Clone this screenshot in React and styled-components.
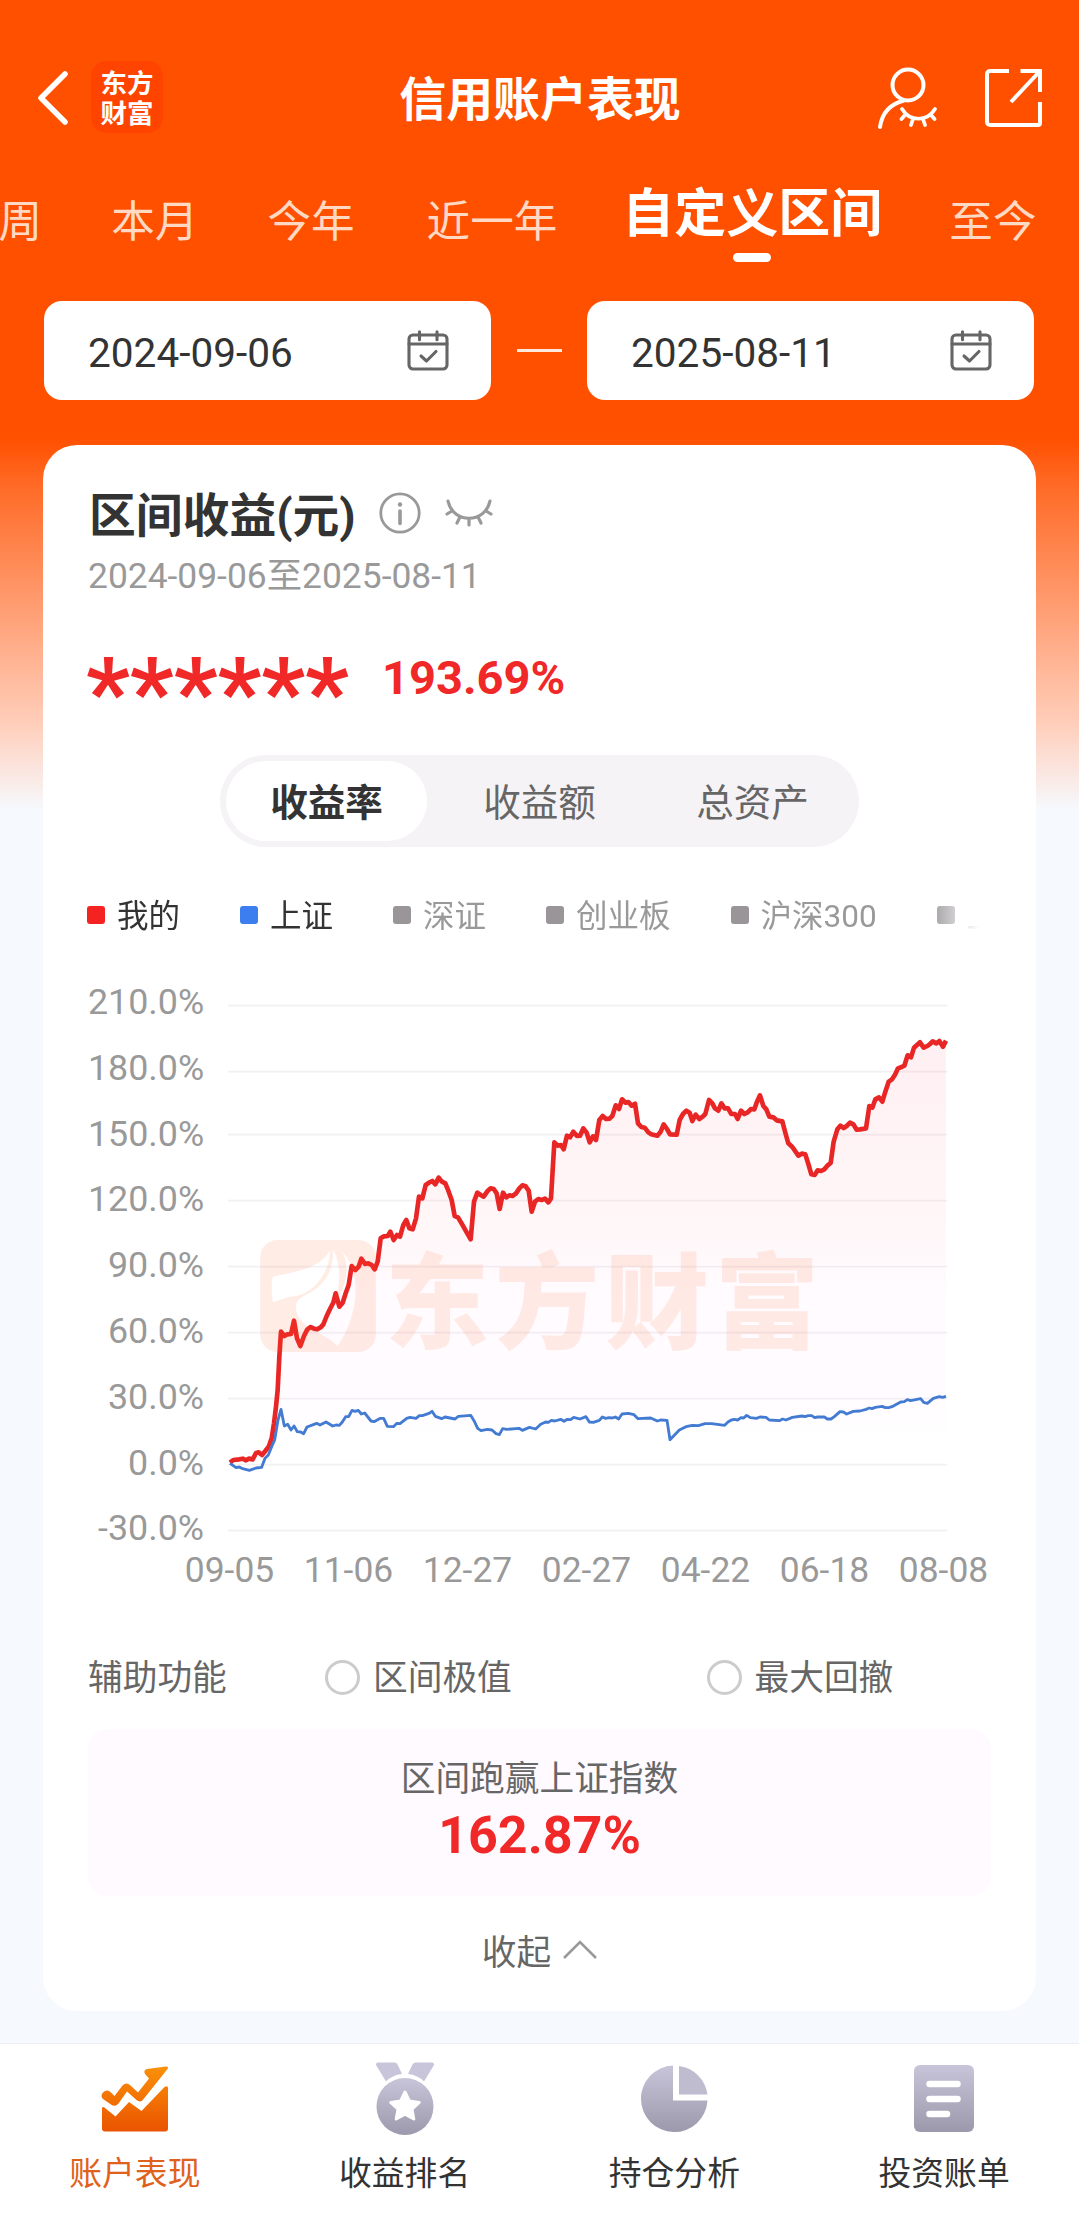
import React from "react";
import styled, { createGlobalStyle } from "styled-components";

const Global = createGlobalStyle`
  *, *::before, *::after { box-sizing: border-box; }
  body { margin: 0; background: #f6faff; }
  svg { display: block; flex: none; }
`;

const Page = styled.div`
  width: 1079px;
  height: 2229px;
  overflow: hidden;
  display: flex;
  flex-direction: column;
  font-family: Roboto, "Noto Sans CJK SC", sans-serif;
  color: #333;
  background: linear-gradient(to bottom, #ff5000 0, #ff5000 438px, #ff6a26 485px, #ffcdb9 722px, #f6faff 812px);
`;

const Header = styled.header`
  height: 78px;
  margin-top: 59px;
  padding: 0 36px 0 37px;
  display: grid;
  grid-template-columns: 1fr auto 1fr;
  align-items: center;
`;

const HeaderSide = styled.div`
  display: flex;
  align-items: center;
  justify-content: ${(p) => (p.$end ? "flex-end" : "flex-start")};
  gap: ${(p) => p.$gap}px;
`;

const BrandBadge = styled.div`
  width: 72px;
  height: 72px;
  margin-top: -2px;
  border-radius: 15px;
  background: #ff4400;
  color: #fff;
  font: 700 26.5px/30px "Noto Sans CJK SC", sans-serif;
  display: flex;
  flex-direction: column;
  align-items: center;
  justify-content: center;
`;

const Title = styled.h1`
  margin: 0;
  padding-top: 3px;
  font-size: 46.9px;
  line-height: 60px;
  font-weight: 700;
  color: #fff;
`;

const Tabs = styled.nav`
  height: 133px;
  padding-top: 41px;
  margin-left: -45px;
  display: flex;
  gap: 69px;
  white-space: nowrap;
`;

const Tab = styled.div`
  flex: none;
  margin-left: ${(p) => p.$inset || 0}px;
  font-size: 43.6px;
  line-height: 90px;
  color: #ffd9c4;
`;

const ActiveTab = styled(Tab)`
  display: flex;
  flex-direction: column;
  align-items: center;
  margin: 0 -2px 0 -4px;
  font-size: 52px;
  line-height: 74px;
  font-weight: 700;
  color: #fff;

  &::after {
    content: "";
    width: 38px;
    height: 9px;
    margin-top: 1px;
    border-radius: 5px;
    background: #fff;
  }
`;

const DateRow = styled.div`
  margin-top: 31px;
  padding: 0 45px 0 44px;
  display: flex;
  align-items: center;
  justify-content: space-between;
`;

const DateField = styled.div`
  width: 447px;
  height: 99px;
  padding: 0 42px 0 44px;
  border-radius: 18px;
  background: #fff;
  display: flex;
  align-items: center;
  justify-content: space-between;
  font-size: 40.6px;

  span { padding-top: 4px; }
`;

const Dash = styled.div`
  width: 45px;
  height: 3px;
  background: #ffe9dc;
`;

const Card = styled.main`
  margin: 45px 43px 0;
  height: 1566px;
  flex: none;
  padding: 40px 45px 0;
  border-radius: 34px;
  background: #fff;
`;

const CardHead = styled.div`
  height: 58px;
  display: flex;
  align-items: center;

  svg { margin-top: -2px; }
`;

const CardTitle = styled.h2`
  margin: 0 23px 0 1px;
  padding-top: 3px;
  font-size: 46.8px;
  line-height: 58px;
  font-weight: 700;
`;

const Period = styled.div`
  margin-top: 10px;
  font-size: 35.4px;
  line-height: 46px;
  color: #999;
`;

const AmountRow = styled.div`
  height: 60px;
  margin-top: 48px;
  display: flex;
  color: #f02828;
  font-weight: 700;
  line-height: 62px;
`;

const Masked = styled.span`
  width: 296px;
  margin-left: -2px;
  font-size: 96.5px;
  line-height: 93px;
`;

const Rate = styled.span`
  font-size: 47px;
`;

const Segments = styled.div`
  width: 639px;
  height: 92px;
  margin: 48px auto 0;
  padding: 6px;
  border-radius: 46px;
  background: #f6f3f7;
  display: flex;
  justify-content: space-between;
`;

const Segment = styled.div`
  width: 201px;
  height: 80px;
  border-radius: 40px;
  font-size: 37.6px;
  line-height: 84px;
  text-align: center;
  color: ${(p) => (p.$on ? "#333" : "#666")};
  font-weight: ${(p) => (p.$on ? 700 : 400)};
  background: ${(p) => (p.$on ? "#fff" : "transparent")};
`;

const Legend = styled.div`
  width: 894px;
  height: 50px;
  margin: 43px 0 0 -1px;
  overflow: hidden;
  display: flex;
  gap: 60px;
  mask-image: linear-gradient(to right, #000 840px, transparent 892px);
`;

const LegendItem = styled.div`
  flex: none;
  display: flex;
  align-items: center;
  gap: 12px;
  font-size: 31.5px;
  line-height: 46px;
  color: ${(p) => (p.$muted ? "#999" : "#333")};

  span { padding-top: 3px; }

  &::before {
    content: "";
    width: 18px;
    height: 18px;
    margin-top: -1px;
    border-radius: 3px;
    background: ${(p) => p.$color};
  }
`;

const Chart = styled.div`
  position: relative;
  margin-top: 29px;
  display: flex;
`;

const YAxis = styled.div`
  width: 116px;
  margin: 1px 24px -1px 0;
  display: flex;
  flex-direction: column;
  text-align: right;
  font-size: 35.8px;
  line-height: 65.8px;
  color: #999;
`;

const Watermark = styled.div`
  position: absolute;
  left: 172px;
  top: 271px;
  height: 112px;
  display: flex;
  align-items: center;
  gap: 9px;
  font: 900 104px/108px "Noto Sans CJK SC", sans-serif;
  letter-spacing: 6px;
  color: #ff5a14;
  opacity: 0.105;
`;

const XAxis = styled.div`
  margin: -11px -12px 0 82px;
  height: 40px;
  display: flex;
  font-size: 35.4px;
  line-height: 40px;
  color: #999;

  span { flex: 1; text-align: center; }
`;

const Helpers = styled.div`
  height: 46px;
  margin-top: 64px;
  display: grid;
  grid-template-columns: 237px 381.5px 1fr;
  font-size: 34.7px;
  line-height: 49px;
  color: #666;
`;

const Option = styled.label`
  display: flex;
  align-items: center;
  gap: 13px;

  &::before {
    content: "";
    width: 35px;
    height: 35px;
    margin-top: -3px;
    border: 3px solid #ccc;
    border-radius: 50%;
  }
`;

const Outperform = styled.div`
  height: 167px;
  margin-top: 29px;
  padding-top: 27px;
  border-radius: 20px;
  background: #fffaff;
  text-align: center;
  font-size: 34.7px;
  line-height: 47px;
  color: #666;

  strong {
    display: block;
    margin-top: 3px;
    font-size: 52px;
    line-height: 60px;
    color: #f02828;
  }
`;

const Collapse = styled.div`
  height: 50px;
  margin-top: 31px;
  display: flex;
  align-items: center;
  justify-content: center;
  gap: 12px;
  font-size: 34.7px;
  line-height: 50px;
  color: #666;

  span { padding-top: 2px; }
  svg { margin-top: -4px; }
`;

const Footer = styled.footer`
  margin-top: 32px;
  height: 186px;
  flex: none;
  border-top: 1px solid #eceef2;
  background: #fff;
  display: grid;
  grid-template-columns: repeat(4, 1fr);
`;

const FooterItem = styled.div`
  display: flex;
  flex-direction: column;
  align-items: center;
  padding-top: 14px;
  font-size: 32.8px;
  line-height: 46px;
  color: ${(p) => (p.$on ? "#e0611c" : "#333")};

  svg { margin-bottom: 13px; }
`;

const RATE = "90,1448 100,1440 118,1438 128,1436 138,1441 146,1436 158,1438 168,1419 176,1417 186,1425 196,1413 206,1400 215,1375 222,1330 228,1280 233,1230 238,1130 243,1055 253,1068 262,1063 273,1062 282,1022 291,1075 301,1098 312,1068 322,1048 332,1041 342,1046 352,1048 362,1042 370,1033 380,1008 390,987 400,968 407,940 418,980 428,968 437,940 446,915 455,858 466,870 476,860 484,836 495,852 505,850 515,855 524,868 533,845 542,775 552,769 563,768 571,755 581,780 591,765 600,770 610,735 619,720 628,745 638,748 648,715 657,650 667,655 677,615 687,608 697,603 706,613 716,593 726,605 736,610 745,632 755,660 764,708 774,712 783,727 812,778 822,665 832,638 842,645 851,650 862,634 872,625 881,627 890,640 899,687 909,638 919,652 928,646 938,648 948,640 958,625 967,616 977,619 986,632 995,695 1005,665 1015,657 1025,660 1035,656 1045,667 1053,655 1063,487 1073,497 1083,495 1091,508 1101,467 1110,472 1120,455 1131,468 1140,467 1150,445 1160,458 1169,487 1179,469 1188,480 1198,420 1208,408 1218,417 1228,416 1237,408 1247,376 1257,387 1266,358 1277,368 1285,366 1295,377 1305,371 1314,430 1324,441 1334,443 1345,457 1354,463 1372,467 1382,455 1391,433 1401,447 1410,463 1430,464 1439,420 1449,402 1459,392 1469,398 1477,423 1487,404 1498,417 1508,410 1516,402 1527,360 1537,370 1545,385 1555,392 1564,370 1574,385 1584,385 1594,402 1605,402 1613,417 1623,392 1633,402 1643,397 1653,387 1663,388 1671,365 1680,346 1690,378 1699,388 1708,410 1720,412 1730,421 1747,424 1757,462 1765,490 1777,501 1795,527 1805,521 1816,523 1826,555 1834,583 1844,585 1853,571 1863,573 1873,568 1882,557 1892,549 1901,485 1912,448 1921,437 1931,444 1940,438 1950,428 1960,433 1970,449 1980,448 1998,445 2008,378 2017,383 2026,358 2037,352 2047,365 2056,335 2066,305 2076,298 2085,284 2094,265 2105,261 2113,257 2123,226 2133,232 2142,203 2151,195 2160,187 2171,203 2182,198 2190,192 2198,184 2209,190 2218,183 2229,200 2238,182";

const INDEX = "90,1450 108,1463 118,1461 128,1466 148,1471 168,1464 185,1462 195,1435 205,1425 215,1400 224,1380 234,1320 243,1288 253,1338 263,1333 273,1350 282,1338 292,1355 302,1356 311,1361 321,1341 340,1334 350,1330 360,1335 378,1326 398,1338 408,1335 418,1336 427,1326 437,1310 446,1310 456,1291 465,1294 475,1291 484,1302 494,1299 513,1323 522,1325 541,1315 551,1315 562,1339 581,1340 590,1330 600,1331 620,1315 630,1312 648,1315 658,1307 667,1307 687,1300 696,1294 706,1309 725,1316 735,1311 765,1317 775,1309 812,1306 822,1322 833,1345 843,1352 862,1348 876,1350 888,1361 898,1364 908,1346 920,1348 957,1345 967,1351 988,1342 1007,1347 1022,1333 1037,1326 1045,1327 1054,1321 1064,1323 1082,1318 1092,1324 1102,1318 1112,1319 1121,1312 1140,1317 1158,1310 1168,1326 1180,1327 1198,1321 1207,1311 1217,1315 1227,1313 1237,1314 1246,1311 1256,1317 1266,1302 1285,1300 1302,1304 1314,1316 1352,1314 1372,1323 1382,1320 1401,1321 1410,1379 1438,1350 1458,1340 1477,1336 1495,1337 1515,1331 1535,1331 1574,1336 1584,1326 1594,1320 1603,1318 1613,1320 1623,1313 1631,1314 1640,1306 1651,1313 1669,1315 1680,1311 1698,1312 1708,1320 1738,1322 1748,1317 1758,1320 1777,1312 1806,1308 1815,1310 1825,1307 1835,1307 1844,1313 1853,1311 1873,1311 1882,1317 1893,1317 1903,1310 1920,1295 1930,1296 1940,1302 1960,1294 1980,1293 1998,1288 2008,1284 2016,1286 2026,1282 2046,1279 2056,1283 2066,1283 2076,1280 2102,1266 2113,1265 2122,1259 2132,1262 2162,1256 2171,1267 2182,1270 2200,1255 2218,1250 2228,1252 2238,1249";

const GRID = [77, 275, 464, 662, 860, 1058, 1256, 1454, 1652];
const Y_LABELS = ["210.0%", "180.0%", "150.0%", "120.0%", "90.0%", "60.0%", "30.0%", "0.0%", "-30.0%"];
const X_LABELS = ["09-05", "11-06", "12-27", "02-27", "04-22", "06-18", "08-08"];

const LEGEND = [
  { name: "我的", color: "#f52222" },
  { name: "上证", color: "#3c7df0" },
  { name: "深证", color: "#999599", muted: true },
  { name: "创业板", color: "#999599", muted: true },
  { name: "沪深300", color: "#999599", muted: true },
  { name: "上证50", color: "#999599", muted: true },
];

const BackIcon = () => (
  <svg width="34" height="54" viewBox="0 0 34 54" fill="none" stroke="#fff" strokeWidth="5.500" strokeLinecap="round" strokeLinejoin="round">
    <path d="M28 3 4 27l24 24" />
  </svg>
);

const UserHiddenIcon = () => (
  <svg width="60" height="64" viewBox="0 0 60 64" fill="none" stroke="#fff" strokeWidth="4" strokeLinecap="round">
    <circle cx="31" cy="19" r="15.500" />
    <path d="M27 34.500C13 38 5 47 3 61" />
    <path d="M25 43c8 13 25 13 33 0M28 49l-3.500 4M36 53l-2 6M46 53l2 6M54 49l3.500 4" strokeWidth="3.700" />
  </svg>
);

const ShareIcon = () => (
  <svg width="58" height="60" viewBox="0 0 58 60" fill="none" stroke="#fff" strokeWidth="4">
    <path d="M24 3H5a3 3 0 0 0-3 3v48a3 3 0 0 0 3 3h48a2 2 0 0 0 2-2V34" />
    <path d="M35.500 3H55v21M55 3 26 34" />
  </svg>
);

const CalendarIcon = () => (
  <svg width="42" height="42" viewBox="0 0 42 42" fill="none" stroke="#666" strokeWidth="3.100" strokeLinecap="round" strokeLinejoin="round">
    <rect x="2" y="5" width="38" height="34" rx="4" />
    <path d="M2 14h38M12.500 1.800v8M30 1.800v8M14 26l5.500 5 9.500-9.500" />
  </svg>
);

const InfoIcon = () => (
  <svg width="42" height="42" viewBox="0 0 42 42" fill="none" stroke="#999" strokeWidth="2.800" strokeLinecap="round">
    <circle cx="21" cy="21" r="19.200" />
    <path d="M21 19v12.500" strokeWidth="3.600" />
    <circle cx="21" cy="12.500" r="2.200" fill="#999" stroke="none" />
  </svg>
);

const EyeClosedIcon = () => (
  <svg width="48" height="30" viewBox="0 0 48 30" fill="none" stroke="#999" strokeWidth="3.200" strokeLinecap="round">
    <path d="M3 3c5 23 37 23 42 0M7 13l-5 3M15 19l-3 6M24 21v6M33 19l3 6M41 13l5 3" />
  </svg>
);

const BrandMark = () => (
  <svg width="116" height="112" viewBox="180 780 346 335">
    <path
      fill="#ff5a14"
      fillRule="evenodd"
      d="M232 780H474a52 52 0 0 1 52 52V1063a52 52 0 0 1-52 52H232a52 52 0 0 1-52-52V832a52 52 0 0 1 52-52ZM218 890C300 872 360 862 388 812C392 860 350 945 270 950C250 955 232 962 218 966C214 940 213 905 218 890ZM398 808C402 870 370 920 320 942C285 958 284 975 290 1000C310 1050 380 1060 412 1098C470 1010 490 890 425 812C455 870 430 940 398 970C425 910 420 850 398 808Z"
    />
  </svg>
);

const ChevronUp = () => (
  <svg width="34" height="22" viewBox="0 0 34 22" fill="none" stroke="#999" strokeWidth="2.600">
    <path d="M1 19 17 3l16 16" />
  </svg>
);

const GreyGradient = ({ id }) => (
  <linearGradient id={id} x1="0" y1="0" x2="0" y2="1">
    <stop offset="0" stopColor="#c8c5da" />
    <stop offset="1" stopColor="#9c99ac" />
  </linearGradient>
);

const TrendIcon = () => (
  <svg width="68" height="80" viewBox="0 0 68 80">
    <defs>
      <linearGradient id="trend" gradientUnits="userSpaceOnUse" x1="0" y1="7" x2="0" y2="73">
        <stop offset="0" stopColor="#fb9208" />
        <stop offset="1" stopColor="#ea5400" />
      </linearGradient>
    </defs>
    <path fill="url(#trend)" d="M2 34.500q4-4 8 0l3.500 3.500 8-10.500q4-4 8 0l7.500 7 11-14-4-4.500q-2-4 2-5l19-2.500q3 0 1.500 2.500L43 40.500q-3 5-7.500 1.500l-9.500-8.500-8.500 12q-3.500 4-7.500 1L2 41q-3-3 0-6.500Z" />
    <path fill="url(#trend)" d="M1 50q1-2 3 0l10.500 8.500L28 44l12.500 9L63.500 29q3.500-2 3.500 1v40.500q0 3-3 3H4q-3 0-3-3Z" />
  </svg>
);

const MedalIcon = () => (
  <svg width="68" height="80" viewBox="0 0 68 80">
    <defs><GreyGradient id="medal" /></defs>
    <path fill="#c8c5da" d="M7 4.500h16.500q2 0 3 2l4.500 9.500q-10 1-16 7.500L5 7Q4.500 5 7 4.500ZM61 4.500H44.500q-2 0-3 2l-4.500 9.500q10 1 16 7.500L63 7q.5-2-2-2.500Z" />
    <circle cx="34" cy="48.500" r="28.500" fill="url(#medal)" />
    <path fill="#fff" stroke="#fff" strokeWidth="3" strokeLinejoin="round" d="m34 34 4.300 9 10 1.400-7.300 6.800 1.800 9.800-8.800-4.700-8.800 4.700 1.800-9.800-7.300-6.800 10-1.400Z" />
  </svg>
);

const PieIcon = () => (
  <svg width="68" height="80" viewBox="0 0 68 80">
    <defs><GreyGradient id="pie" /></defs>
    <path fill="url(#pie)" d="M33 7.500a33.300 33.300 0 1 0 34.500 35H33Z" />
    <path fill="#bfbcd0" d="M39 8v28.500h28.500A33 33 0 0 0 39 8Z" />
  </svg>
);

const BillIcon = () => (
  <svg width="68" height="80" viewBox="0 0 68 80">
    <defs><GreyGradient id="bill" /></defs>
    <rect x="4" y="7" width="60" height="67" rx="6" fill="url(#bill)" />
    <path d="M19.500 26h28M19.500 41h28M19.500 56H37" stroke="#fff" strokeWidth="6.500" strokeLinecap="round" />
  </svg>
);

const Plot = () => (
  <svg width="720" height="592" viewBox="84 -33 2160 1776">
    <defs>
      <linearGradient id="area" gradientUnits="userSpaceOnUse" x1="0" y1="180" x2="0" y2="1400">
        <stop offset="0" stopColor="#ff2048" stopOpacity="0.07" />
        <stop offset="0.45" stopColor="#ff3048" stopOpacity="0.042" />
        <stop offset="0.62" stopColor="#ff40c0" stopOpacity="0.022" />
        <stop offset="0.85" stopColor="#ff40ff" stopOpacity="0.018" />
        <stop offset="1" stopColor="#ff40ff" stopOpacity="0" />
      </linearGradient>
    </defs>
    {GRID.map((y) => (
      <line key={y} x1="84" x2="2242" y1={y} y2={y} stroke="#f3f0f4" strokeWidth="5" />
    ))}
    <polygon points={`90,1450 ${RATE} 2238,1450`} fill="url(#area)" />
    <polyline points={RATE} fill="none" stroke="#e92626" strokeWidth="14" strokeLinejoin="round" />
    <polyline points={INDEX} fill="none" stroke="#437bd2" strokeWidth="8.500" strokeLinejoin="round" />
  </svg>
);

export default function App() {
  return (
    <Page>
      <Global />
      <Header>
        <HeaderSide $gap={20}>
          <BackIcon />
          <BrandBadge>
            <span>东方</span>
            <span>财富</span>
          </BrandBadge>
        </HeaderSide>
        <Title>信用账户表现</Title>
        <HeaderSide $end $gap={48}>
          <UserHiddenIcon />
          <ShareIcon />
        </HeaderSide>
      </Header>

      <Tabs>
        <Tab>本周</Tab>
        <Tab>本月</Tab>
        <Tab>今年</Tab>
        <Tab $inset={3}>近一年</Tab>
        <ActiveTab>自定义区间</ActiveTab>
        <Tab>至今</Tab>
      </Tabs>

      <DateRow>
        <DateField><span>2024-09-06</span><CalendarIcon /></DateField>
        <Dash />
        <DateField><span>2025-08-11</span><CalendarIcon /></DateField>
      </DateRow>

      <Card>
        <CardHead>
          <CardTitle>区间收益(元)</CardTitle>
          <HeaderSide $gap={24}>
            <InfoIcon />
            <EyeClosedIcon />
          </HeaderSide>
        </CardHead>
        <Period>2024-09-06至2025-08-11</Period>
        <AmountRow>
          <Masked>******</Masked>
          <Rate>193.69%</Rate>
        </AmountRow>
        <Segments>
          <Segment $on>收益率</Segment>
          <Segment>收益额</Segment>
          <Segment>总资产</Segment>
        </Segments>
        <Legend>
          {LEGEND.map((l) => (
            <LegendItem key={l.name} $color={l.color} $muted={l.muted}><span>{l.name}</span></LegendItem>
          ))}
        </Legend>
        <Chart>
          <YAxis>{Y_LABELS.map((l) => <span key={l}>{l}</span>)}</YAxis>
          <Plot />
          <Watermark><BrandMark />东方财富</Watermark>
        </Chart>
        <XAxis>{X_LABELS.map((l) => <span key={l}>{l}</span>)}</XAxis>
        <Helpers>
          <span>辅助功能</span>
          <Option>区间极值</Option>
          <Option>最大回撤</Option>
        </Helpers>
        <Outperform>
          区间跑赢上证指数
          <strong>162.87%</strong>
        </Outperform>
        <Collapse><span>收起</span><ChevronUp /></Collapse>
      </Card>

      <Footer>
        <FooterItem $on><TrendIcon />账户表现</FooterItem>
        <FooterItem><MedalIcon />收益排名</FooterItem>
        <FooterItem><PieIcon />持仓分析</FooterItem>
        <FooterItem><BillIcon />投资账单</FooterItem>
      </Footer>
    </Page>
  );
}
